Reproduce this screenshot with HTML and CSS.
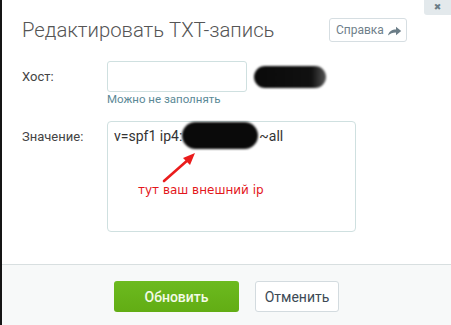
FILE: index.html
```html
<!DOCTYPE html>
<html lang="ru">
<head>
<meta charset="utf-8">
<link rel="stylesheet" href="styles.css">
</head>
<body>
<div class="modal">
  <button class="close" type="button">&#x2716;</button>
  <div class="header">
    <h1 class="title">Редактировать TXT-запись</h1>
    <a class="help">Справка
      <svg class="help-icon" width="15" height="10" viewBox="0 0 15 10"><path d="M1 9.5 C2 5.5 5 3.6 9 3.6 V0.8 L14.2 5 L9 9.2 V6.6 C5.6 6.6 3.2 7.6 1 9.5 Z" fill="#6b7d87"/></svg>
    </a>
  </div>
  <div class="content">
    <div class="row host-row">
      <label class="label">Хост:</label>
      <div class="field">
        <div class="field-line">
          <div class="input"></div>
          <span class="blob blob-host"></span>
        </div>
        <div class="hint">Можно не заполнять</div>
      </div>
    </div>
    <div class="row value-row">
      <label class="label label-value">Значение:</label>
      <div class="textarea">
        <div class="value-line"><span>v=spf1 ip4:</span><span class="blob blob-ip"></span><span>~all</span></div>
        <svg class="arrow" width="40" height="32" viewBox="0 0 40 32">
          <line x1="5" y1="30" x2="30" y2="8" stroke="#ea1c1c" stroke-width="2.6" stroke-linecap="round"/>
          <polygon points="36,2 24,7 31,14" fill="#ea1c1c"/>
        </svg>
        <div class="note">тут ваш внешний ip</div>
      </div>
    </div>
  </div>
  <div class="footer">
    <button class="btn btn-primary" type="button">Обновить</button>
    <button class="btn btn-default" type="button">Отменить</button>
  </div>
</div>
</body>
</html>
```
FILE: styles.css
```css
html, body {
  margin: 0;
  padding: 0;
  background: #ffffff;
}
body {
  font-family: Roboto, "Liberation Sans", Arial, sans-serif;
  color: #333;
}
.modal {
  position: relative;
  height: 325px;
  border-left: 2px solid #151515;
  display: flex;
  flex-direction: column;
  box-sizing: border-box;
}
.close {
  position: absolute;
  top: 0;
  right: 0;
  width: 27px;
  height: 15px;
  padding: 0;
  border: 0;
  border-radius: 0 0 0 3px;
  background: #e3e9ec;
  color: #6b7d87;
  font-size: 9px;
  line-height: 13px;
  text-align: center;
  font-family: "DejaVu Sans", sans-serif;
}
.header {
  display: flex;
  align-items: center;
  justify-content: space-between;
  padding: 18px 44px 0 20px;
}
.title {
  margin: 0;
  font-size: 20.3px;
  font-weight: 300;
  line-height: 24px;
  color: #555;
}
.help {
  display: flex;
  align-items: center;
  gap: 3px;
  box-sizing: border-box;
  height: 24px;
  width: 78px;
  padding: 0 0 0 6px;
  border: 1px solid #d6dee2;
  border-radius: 3px;
  font-size: 12px;
  color: #6f808a;
}
.help-icon {
  margin-top: 1px;
}
.content {
  flex: 1;
  padding: 19px 0 0 20px;
}
.row {
  display: flex;
}
.label {
  width: 85px;
  flex: none;
  font-size: 13px;
  color: #444;
}
.host-row .label {
  line-height: 31px;
}
.field-line {
  display: flex;
  align-items: center;
  gap: 7px;
}
.input {
  box-sizing: border-box;
  width: 140px;
  height: 31px;
  border: 1px solid #cfe0e0;
  border-radius: 3px;
}
.blob {
  display: inline-block;
  background: #0a0a0a;
  filter: blur(1px);
}
.blob-host {
  width: 72px;
  height: 22px;
  border-radius: 11px;
  background: linear-gradient(90deg, #0a0a0a 0%, #111 80%, #555 100%);
}
.hint {
  margin-top: 1px;
  font-size: 11.5px;
  line-height: 12px;
  color: #5b8996;
}
.value-row {
  margin-top: 16px;
}
.label-value {
  padding-top: 8px;
  line-height: 16px;
}
.textarea {
  box-sizing: border-box;
  width: 249px;
  height: 111px;
  border: 1px solid #cfe0e0;
  border-radius: 4px;
}
.value-line {
  display: flex;
  align-items: center;
  height: 27px;
  padding-left: 6px;
  font-size: 14px;
  color: #333;
}
.blob-ip {
  width: 76px;
  height: 27px;
  border-radius: 14px;
  margin: 0 1px 0 0;
}
.arrow {
  display: block;
  margin: 2px 0 0 51px;
}
.note {
  margin: 0 0 0 30px;
  font-family: "DejaVu Sans", Verdana, sans-serif;
  font-size: 12px;
  line-height: 14px;
  color: #e3161b;
}
.footer {
  box-sizing: border-box;
  height: 61px;
  border-top: 1px solid #d8dfe0;
  background: #f7f9f9;
  display: flex;
  justify-content: center;
  align-items: flex-start;
  gap: 16px;
  padding-top: 16px;
}
.btn {
  box-sizing: border-box;
  height: 31px;
  border-radius: 3px;
  font-family: Roboto, "Liberation Sans", Arial, sans-serif;
  font-size: 14px;
  padding: 0;
}
.btn-primary {
  width: 125px;
  border: 0;
  background: linear-gradient(#6cba1f, #62ad14);
  color: #f4fbe8;
  font-weight: 500;
}
.btn-default {
  width: 84px;
  border: 1px solid #d3dbdf;
  background: #fff;
  color: #3d4a55;
}
```
